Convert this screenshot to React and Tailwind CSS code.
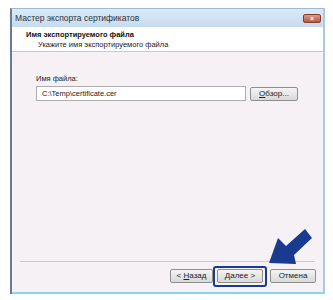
export default function App() {
  const btn =
    "flex items-center justify-center h-[14px] rounded-[2px] border border-[#8e8f8f] bg-gradient-to-b from-[#f4f4f4] to-[#d9d9d9] text-[8px] text-[#222]";
  return (
    <div
      className="w-[333px] h-[300px] bg-white relative"
      style={{ fontFamily: '"Liberation Sans", Arial, sans-serif' }}
    >
      <div className="absolute left-[10px] top-[8px] w-[315px] h-[286px] flex flex-col border-l-2 border-l-[#6b7a96] border-r-2 border-r-[#a9c9e6] border-t border-t-[#9fb8d4]">
        {/* title bar */}
        <div className="h-[18px] flex items-center justify-between bg-gradient-to-b from-[#dce9f6] to-[#c6dbef] pl-[3px] pr-[2px]">
          <span className="text-[8.5px] text-[#2a3444]">Мастер экспорта сертификатов</span>
          <div className="w-[18px] h-[9px] rounded-[2px] bg-gradient-to-b from-[#d89a8a] to-[#b85a48] border border-[#8a3a2a] flex items-center justify-center text-white text-[7px] font-bold leading-none">
            ×
          </div>
        </div>
        {/* header */}
        <div className="h-[25px] bg-white border-b border-[#c9c9c9] pl-[14px] pt-[3px] flex flex-col">
          <span className="text-[7.5px] font-bold leading-[10px] text-[#111]">Имя экспортируемого файла</span>
          <span className="text-[7.5px] leading-[10px] text-[#222] pl-[12px]">Укажите имя экспортируемого файла</span>
        </div>
        {/* body */}
        <div className="flex-1 bg-[#f6f1f5] flex flex-col">
          <div className="flex-1 pl-[24px] pt-[22px]">
            <div className="text-[7.5px] leading-[10px] text-[#222]">Имя файла:</div>
            <div className="flex items-center gap-[4px] mt-[2px]">
              <div className="w-[210px] h-[15px] bg-white border border-[#abadb3] flex items-center pl-[5px] text-[7.5px] text-[#222]">
                C:\Temp\certificate.cer
              </div>
              <div className={btn + " w-[48px] h-[13px]"}>
                <span><u>О</u>бзор...</span>
              </div>
            </div>
          </div>
          <div className="mx-[8px] border-t border-[#cfcacf]" />
          <div className="h-[30px] flex items-start justify-end pr-[7px] pt-[7px] gap-[4px]">
            <div className={btn + " w-[43px]"}>
              <span>&lt; <u>Н</u>азад</span>
            </div>
            <div className={btn + " w-[46px]"}>
              <span><u>Д</u>алее &gt;</span>
            </div>
            <div className={btn + " w-[46px] ml-[3px]"}>
              <span>Отмена</span>
            </div>
          </div>
        </div>
        <div className="h-[2px] bg-[#7fd6f0]" />
      </div>
      {/* highlight around Далее */}
      <div className="absolute left-[213px] top-[266px] w-[54px] h-[21px] rounded-[3px] border-2 border-[#1a3a8f]" />
      {/* arrow */}
      <svg className="absolute left-0 top-0" width="333" height="300">
        <polygon
          points="269,263 278,238 286,246 305,229 312,238 294,255 296,264"
          fill="#1a3a8f"
        />
      </svg>
    </div>
  );
}
